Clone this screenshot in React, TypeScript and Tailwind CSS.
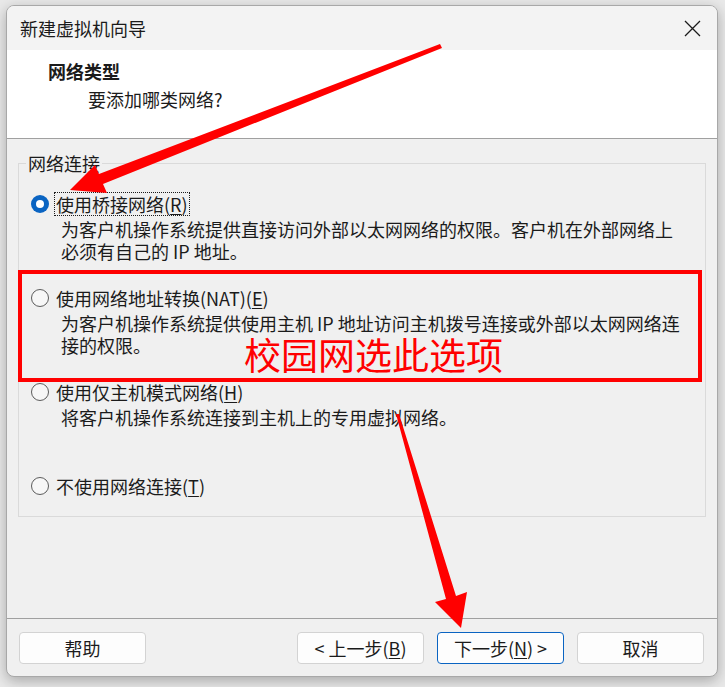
import React from 'react';

type NetOption = {
    label: string;
    key: string;
    suffix?: string;
    desc: string[];
    checked?: boolean;
};

const options: NetOption[] = [
    {
        label: "使用桥接网络",
        key: "R",
        desc: [
            "为客户机操作系统提供直接访问外部以太网网络的权限。客户机在外部网络上",
            "必须有自己的 IP 地址。"
        ],
        checked: true
    },
    {
        label: "使用网络地址转换(NAT)",
        key: "E",
        desc: [
            "为客户机操作系统提供使用主机 IP 地址访问主机拨号连接或外部以太网网络连",
            "接的权限。"
        ]
    },
    {
        label: "使用仅主机模式网络",
        key: "H",
        desc: ["将客户机操作系统连接到主机上的专用虚拟网络。"]
    },
    {
        label: "不使用网络连接",
        key: "T",
        desc: []
    }
];

const Radio = ({ checked }: { checked?: boolean }) =>
    checked ? (
        <div className="w-[18px] h-[18px] rounded-full bg-[#0a64c2] flex items-center justify-center shrink-0">
            <div className="w-[8px] h-[8px] rounded-full bg-white"></div>
        </div>
    ) : (
        <div className="w-[18px] h-[18px] rounded-full border-[1.5px] border-[#5c5c5c] bg-[#f7f7f7] shrink-0"></div>
    );

const Button = ({ children, primary }: { children: React.ReactNode; primary?: boolean }) => (
    <div
        className={
            primary
                ? "w-[127px] h-[32px] rounded-[4px] border border-[#0a64c2] bg-[#fdfdfd] flex items-center justify-center"
                : "w-[127px] h-[32px] rounded-[4px] border border-[#d3d3d3] bg-[#fdfdfd] flex items-center justify-center"
        }
    >
        {children}
    </div>
);

const App = () => {
    return (
        <div className="relative w-[725px] h-[687px] overflow-hidden bg-[#e9e9e9] pt-[5px] pl-[6px] font-['Noto_Sans_CJK_SC',sans-serif] text-[18px] text-[#1b1b1b]">
            {/* Dialog window */}
            <div className="w-[712px] h-[672px] rounded-[8px] border border-[#a8a8a8] bg-[#f0f0f0] overflow-hidden flex flex-col shadow-[0_4px_14px_rgba(0,0,0,0.28)]">
                {/* Title bar */}
                <div className="h-[44px] shrink-0 bg-[#f3f3f3] flex items-center justify-between pl-[13px] pr-[16px]">
                    <span className="leading-[21px]">新建虚拟机向导</span>
                    <svg width="17" height="17" viewBox="0 0 17 17">
                        <path d="M1 1 L16 16 M16 1 L1 16" stroke="#1b1b1b" strokeWidth="1.3" fill="none" />
                    </svg>
                </div>

                {/* Header */}
                <div className="h-[89px] shrink-0 bg-white border-b border-[#a0a0a0] pt-[11px] pl-[41px]">
                    <p className="font-bold leading-[21px]">网络类型</p>
                    <p className="leading-[21px] mt-[7px] ml-[40px]">要添加哪类网络?</p>
                </div>

                {/* Body */}
                <div className="h-[479px] shrink-0 pt-[14px]">
                    <fieldset className="mx-[11px] h-[364px] border border-[#dadada] pl-[12px] pt-[18px]">
                        <legend className="-ml-[5px] px-[2px] leading-[21px]">网络连接</legend>
                        {options.map((opt, index) => (
                            <div key={index} className="h-[94px] flex flex-col">
                                <div className="h-[24px] flex items-center">
                                    <Radio checked={opt.checked} />
                                    <span
                                        className={
                                            opt.checked
                                                ? "ml-[5px] h-[24px] px-[1px] flex items-center border border-dotted border-[#1b1b1b] leading-[21px]"
                                                : "ml-[5px] h-[24px] px-[1px] flex items-center border border-dotted border-transparent leading-[21px]"
                                        }
                                    >
                                        {opt.label}(<span className="underline underline-offset-2">{opt.key}</span>)
                                    </span>
                                </div>
                                <div className="mt-[2px] pl-[30px]">
                                    {opt.desc.map((line, idx) => (
                                        <p key={idx} className="leading-[22px]">
                                            {line}
                                        </p>
                                    ))}
                                </div>
                            </div>
                        ))}
                    </fieldset>
                </div>

                {/* Footer */}
                <div className="flex-1 border-t border-[#a0a0a0] pt-[13px] pl-[12px] pr-[13px] flex">
                    <Button>帮助</Button>
                    <div className="flex-1"></div>
                    <div className="flex gap-[13px]">
                        <Button>
                            &lt; 上一步(<span className="underline underline-offset-2">B</span>)
                        </Button>
                        <Button primary>
                            下一步(<span className="underline underline-offset-2">N</span>) &gt;
                        </Button>
                        <Button>取消</Button>
                    </div>
                </div>
            </div>

            {/* Annotations drawn over the dialog */}
            <div className="absolute left-[18px] top-[270px] w-[684px] h-[112px] border-4 border-[#ff0000] pointer-events-none"></div>
            <div className="absolute left-[244px] top-[336px] text-[37px] leading-none text-[#ff0000] pointer-events-none">
                校园网选此选项
            </div>
            <svg className="absolute left-0 top-0 pointer-events-none" width="725" height="687" viewBox="0 0 725 687">
                <polygon points="440,44 99,174 95,165 70,190 107,193 103,184 442,48" fill="#ff0000" />
                <polygon points="396,414 446,599 435,602 461,628 467,592 456,596 399,414" fill="#ff0000" />
            </svg>
        </div>
    );
};

export default App;
